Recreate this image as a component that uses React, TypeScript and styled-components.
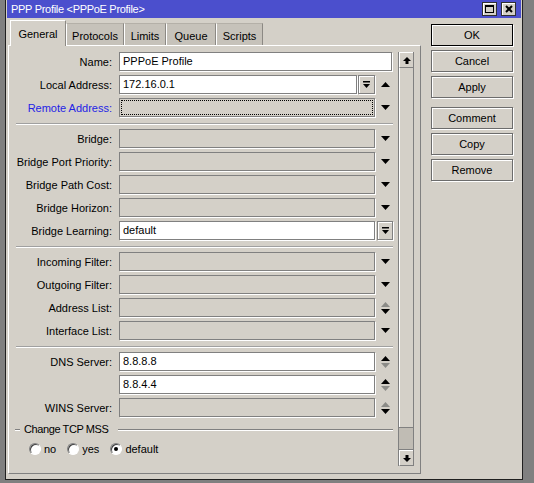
import styled, { createGlobalStyle } from "styled-components";

const GlobalStyle = createGlobalStyle`
  html, body {
    margin: 0;
    padding: 0;
    background: #808080;
  }
  body {
    font-family: "Liberation Sans", Arial, sans-serif;
    font-size: 11px;
    color: #000;
  }
`;

type Arrow = "none" | "down" | "up" | "spinUp" | "spinDown" | "drop";

const rows1 = [
  { label: "Name:", value: "PPPoE Profile", enabled: true, wide: true },
  { label: "Local Address:", value: "172.16.0.1", enabled: true, inlineDrop: true, arrow: "up" as Arrow },
  { label: "Remote Address:", value: "", link: true, focus: true, arrow: "down" as Arrow },
];

const rows2 = [
  { label: "Bridge:", arrow: "down" as Arrow },
  { label: "Bridge Port Priority:", arrow: "down" as Arrow },
  { label: "Bridge Path Cost:", arrow: "down" as Arrow },
  { label: "Bridge Horizon:", arrow: "down" as Arrow },
  { label: "Bridge Learning:", value: "default", enabled: true, arrow: "drop" as Arrow },
];

const rows3 = [
  { label: "Incoming Filter:", arrow: "down" as Arrow },
  { label: "Outgoing Filter:", arrow: "down" as Arrow },
  { label: "Address List:", arrow: "spinDown" as Arrow },
  { label: "Interface List:", arrow: "down" as Arrow },
];

const rows4 = [
  { label: "DNS Server:", value: "8.8.8.8", enabled: true, arrow: "spinUp" as Arrow },
  { label: "", value: "8.8.4.4", enabled: true, arrow: "spinUp" as Arrow },
  { label: "WINS Server:", arrow: "spinDown" as Arrow },
];

type RowData = {
  label: string;
  value?: string;
  enabled?: boolean;
  wide?: boolean;
  link?: boolean;
  focus?: boolean;
  inlineDrop?: boolean;
  arrow?: Arrow;
};

const Tri = ({ dir, color }: { dir: "up" | "down"; color: string }) => (
  <svg width="9" height="5" viewBox="0 0 9 5">
    <path d={dir === "down" ? "M0 0H9L4.5 5Z" : "M4.5 0L9 5H0Z"} fill={color} />
  </svg>
);

const DropIcon = () => (
  <svg width="9" height="8" viewBox="0 0 9 8">
    <rect x="1" y="0" width="7" height="1.5" fill="#000" />
    <path d="M1 3H8L4.5 7Z" fill="#000" />
  </svg>
);

const ScrollIcon = ({ dir }: { dir: "up" | "down" }) => (
  <svg width="8" height="7" viewBox="0 0 8 7">
    {dir === "up" ? (
      <>
        <path d="M4 0L8 4H0Z" fill="#000" />
        <rect x="2.5" y="4" width="3" height="3" fill="#000" />
      </>
    ) : (
      <>
        <rect x="2.5" y="0" width="3" height="3" fill="#000" />
        <path d="M0 3H8L4 7Z" fill="#000" />
      </>
    )}
  </svg>
);

const ArrowIcon = ({ arrow }: { arrow: Arrow }) => {
  if (arrow === "down") return <Tri dir="down" color="#000" />;
  if (arrow === "up") return <Tri dir="up" color="#000" />;
  if (arrow === "spinUp")
    return (
      <Spin>
        <Tri dir="up" color="#000" />
        <Tri dir="down" color="#8c8c88" />
      </Spin>
    );
  if (arrow === "spinDown")
    return (
      <Spin>
        <Tri dir="up" color="#8c8c88" />
        <Tri dir="down" color="#000" />
      </Spin>
    );
  return null;
};

const FormRow = ({ row }: { row: RowData }) => (
  <Row>
    <Label $link={row.link}>{row.label}</Label>
    {row.inlineDrop ? (
      <FieldGroup>
        <Field $enabled={row.enabled}>{row.value}</Field>
        <DropButton>
          <DropIcon />
        </DropButton>
      </FieldGroup>
    ) : (
      <Field $enabled={row.enabled} $wide={row.wide} $focus={row.focus}>
        {row.value}
      </Field>
    )}
    {row.arrow === "drop" ? (
      <DropButton $side>
        <DropIcon />
      </DropButton>
    ) : (
      !row.wide && (
        <ArrowCell>
          <ArrowIcon arrow={row.arrow ?? "none"} />
        </ArrowCell>
      )
    )}
  </Row>
);

const tabs = [
  { name: "General", width: 56 },
  { name: "Protocols", width: 58 },
  { name: "Limits", width: 42 },
  { name: "Queue", width: 50 },
  { name: "Scripts", width: 47 },
];

const App = () => {
  return (
    <>
      <GlobalStyle />
      <Window>
        <TitleBar>
          <Title>PPP Profile &lt;PPPoE Profile&gt;</Title>
          <CaptionButtons>
            <CaptionButton>
              <svg width="9" height="8" viewBox="0 0 9 8">
                <rect x="0.5" y="0.5" width="8" height="7" fill="none" stroke="#000" />
                <rect x="0" y="0" width="9" height="2" fill="#000" />
              </svg>
            </CaptionButton>
            <CaptionButton>
              <svg width="8" height="8" viewBox="0 0 8 8">
                <path d="M1 1L7 7M7 1L1 7" stroke="#000" strokeWidth="2" />
              </svg>
            </CaptionButton>
          </CaptionButtons>
        </TitleBar>
        <Body>
          <MainColumn>
            <TabRow>
              {tabs.map((t, i) => (
                <Tab key={t.name} $active={i === 0} style={{ width: t.width }}>
                  {t.name}
                </Tab>
              ))}
            </TabRow>
            <Panel>
              <Form>
                {rows1.map((r) => (
                  <FormRow key={r.label} row={r} />
                ))}
                <Separator />
                {rows2.map((r) => (
                  <FormRow key={r.label} row={r} />
                ))}
                <Separator />
                {rows3.map((r) => (
                  <FormRow key={r.label} row={r} />
                ))}
                <Separator />
                {rows4.map((r, i) => (
                  <FormRow key={i} row={r} />
                ))}
                <GroupHeader>
                  <span>Change TCP MSS</span>
                </GroupHeader>
                <RadioRow>
                  {["no", "yes", "default"].map((opt) => (
                    <RadioOption key={opt}>
                      <RadioCircle $checked={opt === "default"} />
                      {opt}
                    </RadioOption>
                  ))}
                </RadioRow>
              </Form>
              <ScrollBar>
                <ScrollButton>
                  <ScrollIcon dir="up" />
                </ScrollButton>
                <Track />
                <Thumb />
                <ScrollButton>
                  <ScrollIcon dir="down" />
                </ScrollButton>
              </ScrollBar>
            </Panel>
          </MainColumn>
          <ButtonColumn>
            <ActionButton $default>OK</ActionButton>
            <ActionButton>Cancel</ActionButton>
            <ActionButton>Apply</ActionButton>
            <ActionButton $gap>Comment</ActionButton>
            <ActionButton>Copy</ActionButton>
            <ActionButton>Remove</ActionButton>
          </ButtonColumn>
        </Body>
      </Window>
    </>
  );
};

const Window = styled.div`
  margin-left: 5px;
  width: 518px;
  height: 480px;
  box-sizing: border-box;
  background: #d4d0c8;
  border: 1px solid #202020;
  border-top: none;
  padding: 0 1px 1px;
  display: flex;
  flex-direction: column;
`;

const TitleBar = styled.div`
  height: 18px;
  background: #4b4fcd;
  display: flex;
  align-items: center;
  padding-left: 4px;
  padding-right: 5px;
`;

const Title = styled.div`
  color: #fff;
  flex: 1;
  white-space: nowrap;
  letter-spacing: -0.3px;
`;

const CaptionButtons = styled.div`
  display: flex;
  gap: 4px;
`;

const CaptionButton = styled.div`
  width: 15px;
  height: 14px;
  box-sizing: border-box;
  background: #d4d0c8;
  border: 1px solid #303030;
  box-shadow: inset 1px 1px 0 #fff;
  display: flex;
  align-items: center;
  justify-content: center;
`;

const Body = styled.div`
  display: flex;
  flex: 1;
`;

const MainColumn = styled.div`
  display: flex;
  flex-direction: column;
  margin-left: 1px;
`;

const TabRow = styled.div`
  display: flex;
  align-items: flex-end;
  height: 27px;
  margin-left: 2px;
  position: relative;
  z-index: 1;
`;

const Tab = styled.div<{ $active?: boolean }>`
  box-sizing: border-box;
  height: ${(p) => (p.$active ? 26 : 22)}px;
  margin-bottom: ${(p) => (p.$active ? -1 : 0)}px;
  background: ${(p) => (p.$active ? "#d4d0c8" : "#c6c2ba")};
  border-top: 1px solid ${(p) => (p.$active ? "#fff" : "#b4b0a8")};
  border-left: 1px solid #fff;
  border-right: 1px solid #8c8984;
  display: flex;
  align-items: center;
  justify-content: center;
  padding-top: ${(p) => (p.$active ? 0 : 2)}px;
  white-space: nowrap;
`;

const Panel = styled.div`
  width: 413px;
  height: 429px;
  box-sizing: border-box;
  border: 1px solid;
  border-color: #fff #808080 #808080 #fff;
  display: flex;
  align-items: flex-start;
`;

const Form = styled.div`
  width: 384px;
  padding-top: 4px;
  display: flex;
  flex-direction: column;
`;

const Row = styled.div`
  display: grid;
  grid-template-columns: 110px 256px 18px;
  height: 23px;
  align-items: center;
`;

const Label = styled.div<{ $link?: boolean }>`
  text-align: right;
  padding-right: 7px;
  white-space: nowrap;
  color: ${(p) => (p.$link ? "#2323e6" : "#000")};
`;

const Field = styled.div<{ $enabled?: boolean; $wide?: boolean; $focus?: boolean }>`
  grid-column: span ${(p) => (p.$wide ? 2 : 1)};
  margin-right: ${(p) => (p.$wide ? 1 : 0)}px;
  flex: 1;
  height: 19px;
  box-sizing: border-box;
  border: 1px solid #808080;
  box-shadow: 1px 1px 0 #fff;
  background: ${(p) => (p.$enabled ? "#fff" : "#d4d0c8")};
  padding: 0 3px;
  line-height: 17px;
  white-space: nowrap;
  outline: ${(p) => (p.$focus ? "1px dotted #000" : "none")};
  outline-offset: -3px;
`;

const FieldGroup = styled.div`
  display: flex;
  gap: 1px;
`;

const DropButton = styled.div<{ $side?: boolean }>`
  width: ${(p) => (p.$side ? 16 : 17)}px;
  height: 19px;
  margin-left: ${(p) => (p.$side ? 2 : 0)}px;
  box-sizing: border-box;
  background: #d4d0c8;
  border: 1px solid #808080;
  box-shadow: inset 1px 1px 0 #fff, 1px 1px 0 #fff;
  display: flex;
  align-items: center;
  justify-content: center;
`;

const ArrowCell = styled.div`
  display: flex;
  justify-content: center;
  padding-left: 2px;
`;

const Spin = styled.div`
  display: flex;
  flex-direction: column;
  gap: 2px;
`;

const Separator = styled.div`
  height: 8px;
  margin-left: 7px;
  display: flex;
  align-items: center;

  &::before {
    content: "";
    flex: 1;
    height: 1px;
    background: #a0a0a0;
    box-shadow: 0 1px 0 #fff;
  }
`;

const GroupHeader = styled.div`
  height: 20px;
  margin-left: 6px;
  display: flex;
  align-items: center;

  &::before {
    content: "";
    width: 5px;
    height: 1px;
    background: #808080;
    box-shadow: 0 1px 0 #fff;
  }

  span {
    padding: 0 10px 0 4px;
    letter-spacing: -0.4px;
  }

  &::after {
    content: "";
    flex: 1;
    height: 1px;
    background: #808080;
    box-shadow: 0 1px 0 #fff;
  }
`;

const RadioRow = styled.div`
  display: flex;
  align-items: center;
  gap: 11px;
  height: 16px;
  margin-top: 2px;
  padding-left: 20px;
`;

const RadioOption = styled.label`
  display: flex;
  align-items: center;
  gap: 3px;
`;

const RadioCircle = styled.span<{ $checked?: boolean }>`
  width: 12px;
  height: 12px;
  box-sizing: border-box;
  border-radius: 50%;
  background: #fff;
  border: 1px solid;
  border-color: #808080 #fff #fff #808080;
  box-shadow: inset 1px 1px 0 #404040;
  display: flex;
  align-items: center;
  justify-content: center;

  &::after {
    content: "";
    width: 4px;
    height: 4px;
    border-radius: 50%;
    background: ${(p) => (p.$checked ? "#000" : "transparent")};
  }
`;

const ScrollBar = styled.div`
  width: 16px;
  height: 414px;
  margin: 6px 0 0 5px;
  box-sizing: border-box;
  border-left: 1px solid #808080;
  border-right: 1px solid #808080;
  display: flex;
  flex-direction: column;
`;

const ScrollButton = styled.div`
  height: 16px;
  box-sizing: border-box;
  background: #d4d0c8;
  border-top: 1px solid #fff;
  border-bottom: 1px solid #808080;
  border-left: 1px solid #fff;
  display: flex;
  align-items: center;
  justify-content: center;
`;

const Track = styled.div`
  flex: 1;
  background: #d4d0c8;
  border-left: 1px solid #fff;
`;

const Thumb = styled.div`
  height: 23px;
  box-sizing: border-box;
  background: #c0bcb4;
  border-top: 1px solid #808080;
  border-bottom: 1px solid #808080;
`;

const ButtonColumn = styled.div`
  display: flex;
  flex-direction: column;
  gap: 4px;
  margin-left: 10px;
  padding-top: 6px;
`;

const ActionButton = styled.button<{ $default?: boolean; $gap?: boolean }>`
  width: 82px;
  height: 22px;
  margin-top: ${(p) => (p.$gap ? 5 : 0)}px;
  padding: 0;
  font: inherit;
  color: #000;
  background: #d4d0c8;
  border: 1px solid ${(p) => (p.$default ? "#000" : "#6c6c6c")};
  box-shadow: inset 1px 1px 0 #fff, 1px 1px 0 #fff;
  border-radius: 0;
`;

export default App;
